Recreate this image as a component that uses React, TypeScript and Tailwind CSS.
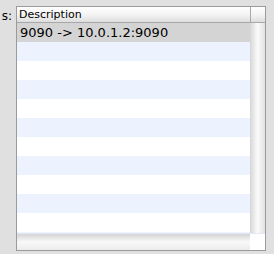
import React from 'react';

const rows = ['9090 -> 10.0.1.2:9090', '', '', '', '', '', '', '', '', '', '', ''];

export default function App() {
  return (
    <div className="w-[274px] h-[254px] bg-[#e0e0e0] flex font-['DejaVu_Sans',sans-serif] overflow-hidden">
      {/* cut-off field label */}
      <div className="w-[16px] pt-[10px] text-[12px] leading-none text-black overflow-hidden flex justify-end">
        <span className="pr-[4px]">s:</span>
      </div>

      <div className="mt-[6px] w-[250px] h-[245px] border border-[#9b9b9b] bg-white flex flex-col">
        {/* header */}
        <div className="flex h-[16px] border-b border-[#a8a8a8] bg-gradient-to-b from-white via-[#f4f4f4] to-[#dedede]">
          <div className="flex-1 pl-[2px] text-[11px] leading-[15px] text-black">Description</div>
          <div className="w-[15px] border-l border-[#a8a8a8]" />
        </div>

        {/* body */}
        <div className="flex flex-1 min-h-0">
          <div className="flex-1 overflow-hidden">
            {rows.map((r, i) => (
              <div
                key={i}
                className={`h-[19px] pl-[3px] text-[13px] leading-[19px] text-black whitespace-nowrap ${
                  i === 0 ? 'bg-[#d4d4d4]' : i % 2 === 1 ? 'bg-[#edf3fe]' : 'bg-white'
                }`}
              >
                {r}
              </div>
            ))}
          </div>
          {/* vertical scroll track */}
          <div className="w-[15px] bg-gradient-to-r from-[#d6d6d6] via-[#fbfbfb] to-[#e2e2e2]" />
        </div>

        {/* horizontal scroll track + corner */}
        <div className="flex h-[17px] border-t border-[#e4e8f4]">
          <div className="flex-1 bg-gradient-to-b from-[#d4d4d4] via-[#f9f9f9] to-[#ececec]" />
          <div className="w-[15px] bg-white" />
        </div>
      </div>
    </div>
  );
}
